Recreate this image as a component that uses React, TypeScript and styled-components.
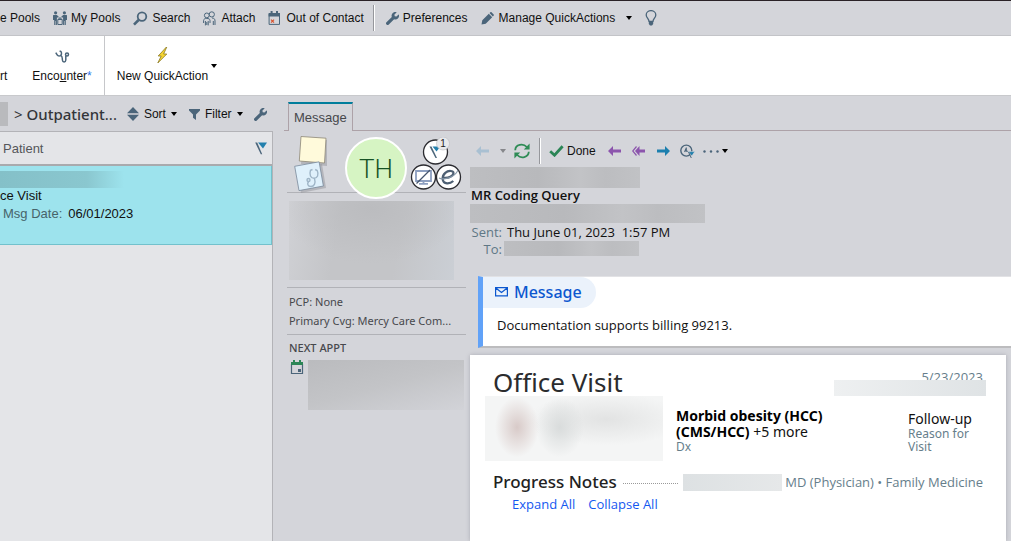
import React from "react";
import styled, { createGlobalStyle } from "styled-components";

const ui = `"Liberation Sans", Arial, sans-serif`;
const human = `"Noto Sans", "Open Sans", sans-serif`;
const reading = `"Open Sans", "Noto Sans", sans-serif`;
const slate = "#4b657a";

const GlobalStyle = createGlobalStyle`
  * { box-sizing: border-box; }
  body { margin: 0; background: #d4d5da; color: #111; font: 12px/16px ${ui}; overflow: hidden; }
  button { font: inherit; color: inherit; background: none; border: 0; padding: 0; cursor: pointer; }
  svg { display: block; flex: none; }
`;

const Page = styled.div`
  display: flex;
  flex-direction: column;
  height: 100vh;
  overflow: hidden;
`;

const Toolbar = styled.nav`
  display: flex;
  align-items: center;
  height: 36px;
  flex: none;
  border-top: 1px solid #2a2226;
  border-bottom: 1px solid #c3c4c8;
  white-space: nowrap;
`;

const ToolButton = styled.button<{ $gap?: number; $space?: number }>`
  display: flex;
  align-items: center;
  gap: ${(p) => p.$gap ?? 5}px;
  margin-right: ${(p) => p.$space ?? 13}px;
`;

const Divider = styled.span<{ $space?: number }>`
  width: 2px;
  height: 26px;
  margin-right: ${(p) => p.$space ?? 8}px;
  border-left: 1px solid #96979c;
  background: #fff;
  flex: none;
`;

const Caret = styled.span<{ $color?: string }>`
  border: 3px solid transparent;
  border-top: 4px solid ${(p) => p.$color ?? "#000"};
  border-bottom: 0;
  flex: none;
`;

const ActionBar = styled.div`
  display: flex;
  height: 60px;
  flex: none;
  background: #fff;
  border-bottom: 1px solid #c8c9cc;
`;

const ActionGroup = styled.div`
  display: flex;
  padding-right: 12px;
  border-right: 1px solid #c6c7ca;
`;

const ActionButton = styled.button<{ $left?: number }>`
  display: flex;
  flex-direction: column;
  align-items: center;
  justify-content: flex-end;
  gap: 4px;
  height: 100%;
  margin-left: ${(p) => p.$left ?? 0}px;
  padding-bottom: 11px;
  white-space: nowrap;
`;

const Star = styled.span`
  color: #2f78e8;
`;

const QuickWrap = styled.div`
  display: flex;
  align-items: center;
  gap: 3px;
`;

const Body = styled.div`
  display: flex;
  flex: 1;
  min-height: 0;
`;

const ListPane = styled.section`
  display: flex;
  flex-direction: column;
  width: 27%;
`;

const ListHead = styled.header`
  display: flex;
  align-items: center;
  height: 35px;
  flex: none;
  padding-top: 1px;
  white-space: nowrap;
`;

const Redacted = styled.div<{ $w: string; $h: number; $bg?: string }>`
  width: ${(p) => p.$w};
  height: ${(p) => p.$h}px;
  flex: none;
  background: ${(p) => p.$bg ?? "linear-gradient(90deg, #bdbec1, #b8b9bc 40%, #c2c3c6 65%, #bcbdc0 80%, #c1c2c5)"};
`;

const Crumb = styled.h1`
  margin: 0 10px 0 6px;
  font: 400 15px/20px ${human};
  color: #333539;
`;

const CrumbName = styled.span`
  font-weight: 500;
  color: #333539;
`;

const List = styled.div`
  flex: 1;
  background: #e4e5e8;
  border-top: 1px solid #b3b3b7;
  border-right: 1px solid #b3b3b7;
`;

const ListColumns = styled.div`
  display: flex;
  align-items: center;
  justify-content: space-between;
  height: 34px;
  padding: 1px 5px 0 3px;
  border-bottom: 2px solid #a9aaad;
  font-size: 13px;
  color: #55565a;
`;

const Row = styled.article`
  height: 79px;
  padding-top: 5px;
  background: #9de3ed;
  border: solid #72c1cc;
  border-width: 0 1px 1px 0;
  font-size: 13px;
  line-height: 18px;
`;

const RowLines = styled.div`
  margin-top: -1px;
`;

const RowLine = styled.div`
  display: flex;
  gap: 6px;
`;

const RowLabel = styled.span`
  padding-left: 3px;
  color: #47636a;
`;

const Detail = styled.section`
  display: flex;
  flex-direction: column;
  flex: 1;
  min-width: 0;
  padding-left: 11px;
`;

const Tabs = styled.div`
  display: flex;
  align-items: flex-end;
  height: 35px;
  flex: none;
  padding-left: 4px;
  border-bottom: 1px solid #ada2a8;
`;

const Tab = styled.button`
  height: 29px;
  margin-bottom: -1px;
  padding: 1px 5px 0;
  background: #d4d5da;
  border: 1px solid #ada2a8;
  border-top: 2px solid #007e9c;
  border-bottom: 0;
  font-size: 13px;
  color: #47484c;
`;

const DetailBody = styled.div`
  display: flex;
  flex: 1;
  min-height: 0;
`;

const Storyboard = styled.aside`
  width: 186px;
  flex: none;
  padding: 5px 4px 0 3px;
  font: 11px/19px ${human};
  color: #47484c;
`;

const Badges = styled.div`
  display: flex;
  align-items: center;
  height: 57px;
  border-bottom: 1px solid #b1b2b7;
  padding-left: 7px;
`;

const Avatar = styled.div`
  display: grid;
  place-items: center;
  width: 62px;
  height: 62px;
  margin: 7px 3px 0 18px;
  padding-top: 3px;
  flex: none;
  border: 2px solid #fff;
  border-radius: 50%;
  background: #d6f4c3;
  color: #175225;
  font: 300 26px/28px Roboto, ${ui};
`;

const Rule = styled.div`
  padding: 4px 0 4px 2px;
  border-top: 1px solid #b1b2b7;
  white-space: nowrap;
`;

const Photo = styled.div`
  padding: 8px 0 7px 2px;
`;

const SectionTitle = styled.h2`
  margin: 0;
  font: 500 11px/18px ${human};
`;

const Appt = styled.div`
  display: flex;
  gap: 4px;
  padding: 3px 0 0 1px;
`;

const Main = styled.main`
  display: flex;
  flex-direction: column;
  flex: 1;
  min-width: 0;
  font: 13px/18px ${reading};
`;

const MessageTools = styled.div`
  display: flex;
  align-items: center;
  height: 36px;
  padding: 4px 0 0 6px;
  flex: none;
  font: 12px/16px ${ui};
`;

const Subject = styled.h2`
  height: 16px;
  margin: 0;
  padding-left: 1px;
  font: 600 13px/14px ${reading};
`;

const Meta = styled.div`
  display: flex;
  align-items: center;
  height: 17px;
  white-space: pre;
`;

const MetaLabel = styled.span<{ $gap?: number }>`
  width: 32px;
  margin-right: ${(p) => p.$gap ?? 5}px;
  text-align: right;
  color: #5f7785;
`;

const MessageCard = styled.section`
  height: 72px;
  margin: 19px 0 7px 8px;
  flex: none;
  background: #fff;
  border: solid #bcbcbe;
  border-width: 1px 0 2px;
  border-left: 5px solid #61a2f8;
  border-top-color: #e2e2e5;
`;

const CardTitle = styled.h3`
  display: flex;
  align-items: center;
  gap: 6px;
  width: max-content;
  margin: 0;
  padding: 0 14px 1px 12px;
  border-radius: 0 16px 16px 0;
  background: #ebf2fb;
  color: #0b57cf;
  font: 500 16px/30px ${human};
`;

const CardText = styled.p`
  margin: 8px 0 0 14px;
`;

const Report = styled.article`
  flex: 1;
  margin-right: 5px;
  padding: 10px 23px 0 23px;
  background: #fff;
  box-shadow: 0 0 4px #a9aab2;
`;

const ReportHead = styled.header`
  display: flex;
  justify-content: space-between;
  height: 31px;
`;

const ReportTitle = styled.h2`
  margin: 0;
  font: 400 26px/34px ${human};
  color: #2b2c2e;
`;

const ReportDate = styled.div`
  display: flex;
  flex-direction: column;
  align-items: flex-end;
  padding-top: 4px;
  color: #667e8b;
  line-height: 16px;
`;

const DateMask = styled(Redacted)`
  margin: -5px -3px 0 0;
  position: relative;
`;

const Summary = styled.div`
  display: flex;
  align-items: flex-start;
  height: 65px;
  font: 14px/16px ${human};
`;

const Blurred = styled(Redacted)`
  margin: 0 13px 0 -8px;
`;

const Fact = styled.div<{ $w: number; $top: number }>`
  width: ${(p) => p.$w}px;
  padding-top: ${(p) => p.$top}px;
`;

const Diagnosis = styled.b`
  font-weight: 700;
  color: #000;
`;

const Hint = styled.div`
  font-size: 12px;
  line-height: 13px;
  color: #667e8b;
`;

const Spacer = styled.div`
  flex: 1;
`;

const NotesHead = styled.div`
  display: flex;
  align-items: center;
  padding-top: 8px;
  color: #667e8b;
  white-space: nowrap;
`;

const NotesTitle = styled.h3`
  margin: 0 6px 0 0;
  font: 500 17px/26px ${human};
  color: #222;
`;

const Dots = styled.span`
  flex: 1;
  margin-right: 5px;
  padding-top: 3px;
  border-bottom: 1px dotted #9a9a9a;
`;

const Links = styled.div`
  display: flex;
  gap: 13px;
  padding: 0 0 0 19px;
`;

const Link = styled.a`
  color: #1458f0;
  text-decoration: none;
`;

const Wrench = ({ size = 13 }: { size?: number }) => (
  <svg width={size} height={size} viewBox="0 0 512 512" fill={slate}>
    <path d="M507 109c-2-10-14-12-21-5l-75 75-68-11-11-68 75-75c7-7 4-19-5-21a144 144 0 0 0-173 189L19 402a65 65 0 1 0 92 92l208-209a144 144 0 0 0 188-176z" />
  </svg>
);

const PeopleIcon = () => (
  <svg width="14" height="15" viewBox="0 0 14 15" fill={slate}>
    <circle cx="2.6" cy="1.8" r="1.6" /><circle cx="11.4" cy="1.8" r="1.6" />
    <path d="M.4 4h3.4l1.800 1.500v1H3.900V14H2.900v-4h-.5v4H1.200V9H0V4.600zM13.600 4h-3.400L8.400 5.500v1h1.700V14h1v-4h.5v4h1.200V9H14V4.600z" />
    <path d="M4.800 8.500h4.400v5H4.800zM6 8.300V7h2v1.300" fill="#d4d5da" stroke={slate} />
  </svg>
);

const SearchIcon = () => (
  <svg width="15" height="15" viewBox="0 0 15 15" fill="none" stroke={slate}>
    <circle cx="9" cy="5.6" r="4.3" strokeWidth="1.8" /><path d="M5.6 9 1 13.6" strokeWidth="2.6" />
  </svg>
);

const AttachIcon = () => (
  <svg width="13" height="15" viewBox="0 0 13 15" fill="none" stroke={slate}>
    <circle cx="8.8" cy="3.4" r="2.6" /><path d="M9 7c2 0 3 1 3 3v4M10.3 10v4" />
    <circle cx="3.8" cy="4.4" r="2.4" fill="#d4d5da" /><path d="M.6 12V9.5C.6 8 2 7.4 3.8 7.4S7 8 7 9.5V12M2.4 10v4.4M5.2 10v4.4M3.8 11v3" />
  </svg>
);

const CalendarX = () => (
  <svg width="13" height="15" viewBox="0 0 13 15">
    <path d="M1.1 3v10.4h10.4V3" fill="none" stroke={slate} /><path d="M.6 2h11.4v3.6H.6zM2.6 0h2v3h-2zM8 0h2v3H8z" fill={slate} />
    <path d="m3 8.6 3 3m0-3-3 3" stroke="#d9532f" strokeWidth="1.2" />
  </svg>
);

const PencilIcon = () => (
  <svg width="13" height="13" viewBox="0 0 13 13" fill={slate}>
    <path d="m1.3 8.3 6.5-6.5 3.4 3.4-6.5 6.5L.5 12.5zM8.5 1.1 9.2.4c.5-.5 1-.5 1.5 0l1.8 1.8c.5.5.5 1 0 1.5l-.7.8z" />
  </svg>
);

const BulbIcon = () => (
  <svg width="12" height="16" viewBox="0 0 12 16">
    <path d="M4 11.4C4 9 1.2 7.8 1.2 4.9a4.8 4.3 0 0 1 9.6 0C10.8 7.8 8 9 8 11.4z" fill="none" stroke={slate} strokeWidth="1.3" />
    <path d="M3.8 12h4.4v2L7 15.4H5L3.8 14z" fill={slate} />
  </svg>
);

const StethIcon = () => (
  <svg width="15" height="15" viewBox="0 0 15 15" fill="none" stroke={slate} strokeWidth="1.5">
    <path d="M4.600 1.800 6 2.600c1 1.600.4 3.400-.6 4C3.600 7.400 2 6.400 1.500 4.800L.8 3.600M5.800 6.400c1.800.8 1.400 2.600 1.600 4.600.2 2.600 3.200 2.600 3.400 0V7" />
    <circle cx="12" cy="5.600" r="1.500" />
  </svg>
);

const BoltIcon = () => (
  <svg width="11" height="17" viewBox="0 0 11 17">
    <path d="M9.400 0 1.200 9h3L.8 16 9.800 7H6.600L9.800 0z" fill="#f5d431" stroke="#8b7a24" strokeWidth=".8" />
  </svg>
);

const SortIcon = () => (
  <svg width="12" height="14" viewBox="0 0 12 14" fill={slate}><path d="M6 0l6 6.3H0zM0 7.7h12L6 14z" /></svg>
);

const FunnelIcon = () => (
  <svg width="11" height="11" viewBox="0 0 11 11" fill={slate}><path d="M0 0h11v1.4L7 5.6V11L4 8.8V5.6L0 1.4z" /></svg>
);

const FlagIcon = () => (
  <svg width="12" height="13" viewBox="0 0 12 13">
    <path d="M3 .5h9L8 6.4z" fill="#2380ad" /><path d="M.2.6h2l5 11.6H5.8z" fill={slate} />
  </svg>
);

const NotesIcon = () => (
  <svg width="33" height="60" viewBox="0 0 33 60">
    <path d="m9 5 26 1-2 26-26-2z" fill="#8d8e94" opacity=".45" />
    <path d="M7 2.500 32 4.200 30.500 29 5.300 27z" fill="#fffadb" stroke="#8d8676" strokeWidth=".8" />
    <path d="m3 34 25-4 4 24-25 5z" fill="#8d8e94" opacity=".45" />
    <path d="m.7 32.300 24.400-4.500L29.400 52 5 56.600z" fill="#dff0fb" stroke="#78899b" strokeWidth=".8" />
    <g fill="none" stroke="#9fb5c7" strokeWidth="1.400">
      <path d="m18.500 35.500-2 .8c-1.500 4.500.2 8 3.500 8s5.200-3.500 3.200-7.800l-2-1M20.500 44.500c1.500 5-.5 8-3.500 8-3.500 0-4-3-2.500-4.800" />
      <circle cx="14.500" cy="46" r="1.500" />
    </g>
  </svg>
);

const StatusIcons = () => (
  <svg width="52" height="54" viewBox="0 0 52 54">
    <g fill="#fff" stroke="#2b2b30" strokeWidth="1.3">
      <circle cx="25.500" cy="15" r="12" /><circle cx="13.500" cy="40" r="12" /><circle cx="38.500" cy="40" r="12" />
    </g>
    <path d="M22.500 9.500h8l-4 5z" fill="#2380ad" /><path d="M19.500 9.500h2l5.500 11.500h-1.500z" fill={slate} />
    <circle cx="33" cy="6.500" r="6.500" fill="#e8e9ec" stroke="#c0c1c6" strokeWidth=".7" />
    <text x="33" y="10" textAnchor="middle" fontFamily="Liberation Sans, sans-serif" fontSize="10" fill="#222">1</text>
    <path d="M6 34h15v10H6zM13.500 44v2.500M9 46.800h9" fill="none" stroke="#8d9fc0" strokeWidth="1.800" />
    <path d="m6.500 46.500 13.500-13.500" stroke="#45556e" strokeWidth="1.300" />
    <path d="M34 40.800c4.500.4 9.200-1.600 9.500-4.600.2-2.600-5-3.200-8.200-.4-3.800 3.400-3.800 10 1.700 10.500 2.600.2 4.600-.8 6.300-2.300" fill="none" stroke="#4d5f73" strokeWidth="2.200" />
    <path d="M29 41c3 1.600 9.500.5 13-1.600 3.300-2 5.300-4 5.800-6.400" fill="none" stroke="#8798a9" strokeWidth="1.200" />
  </svg>
);

const CalendarIcon = () => (
  <svg width="14" height="15" viewBox="0 0 14 15">
    <path d="M1.500 4v9.500h11V4" fill="none" stroke={slate} strokeWidth="1.200" />
    <path d="M1 2h12v3H1zM3 0h2v3H3zM9 0h2v3H9z" fill="#2b8556" /><path d="M8 9h3v3H8z" fill={slate} />
  </svg>
);

const ArrowIcon = ({ color, flip }: { color: string; flip?: boolean }) => (
  <svg width="13" height="10" viewBox="0 0 13 10" fill={color}>
    <path d={flip ? "M13 5 8 0v3.500H0v3h8V10z" : "M0 5l5-5v3.500h8v3H5V10z"} />
  </svg>
);

const ReplyAllIcon = () => (
  <svg width="13" height="10" viewBox="0 0 13 10" fill="#8c55ad">
    <path d="M3 5l4.500-5v3.500H13v3H7.500V10z" /><path d="M4.500.500.700 5l3.800 4.500" fill="none" stroke="#8c55ad" strokeWidth="1.200" />
  </svg>
);

const RefreshIcon = () => (
  <svg width="16" height="16" viewBox="0 0 16 16" fill="none" stroke="#2f8c56" strokeWidth="1.800">
    <path d="M1.200 7.200C1.500 1.500 9 0 12.800 4M14.800 8.800C14.500 14.500 7 16 3.200 12" />
    <path d="M15.600 .6v5.800H9.800zM.4 15.400V9.600h5.800z" fill="#2f8c56" stroke="none" />
  </svg>
);

const CheckIcon = () => (
  <svg width="15" height="12" viewBox="0 0 15 12"><path d="m1.200 6.300 4.300 3.900L13.600 1.200" fill="none" stroke="#2b8556" strokeWidth="2.800" /></svg>
);

const ClockFlagIcon = () => (
  <svg width="15" height="15" viewBox="0 0 15 15" fill="none" stroke={slate}>
    <circle cx="6.300" cy="6.600" r="5.500" strokeWidth="1.400" />
    <path d="M6.300 3.500v3.700h1.800M6 4.500 4.600 8" strokeWidth="1.100" />
    <path d="M8.200 7.600h6.600l-3 4.400z" fill="#2380ad" stroke="#d4d5da" strokeWidth=".6" /><path d="m8.500 8 2.800 6" />
  </svg>
);

const DotsIcon = () => (
  <svg width="16" height="3" viewBox="0 0 16 3" fill={slate}>
    <circle cx="1.500" cy="1.500" r="1.200" /><circle cx="8" cy="1.500" r="1.200" /><circle cx="14.500" cy="1.500" r="1.200" />
  </svg>
);

const MailIcon = () => (
  <svg width="13" height="10" viewBox="0 0 13 10" fill="none" stroke="#0b57cf" strokeWidth="1.200">
    <path d="M.6.6h11.800v8.300H.6zM.8 1l5.700 4.500L12.200 1" />
  </svg>
);

export default function App() {
  return (
    <Page>
      <GlobalStyle />
      <Toolbar>
        <ToolButton>e Pools</ToolButton>
        <ToolButton $gap={4}><PeopleIcon />My Pools</ToolButton>
        <ToolButton $gap={4}><SearchIcon />Search</ToolButton>
        <ToolButton><AttachIcon />Attach</ToolButton>
        <ToolButton $space={9}><CalendarX />Out of Contact</ToolButton>
        <Divider $space={11} />
        <ToolButton $gap={4}><Wrench />Preferences</ToolButton>
        <ToolButton $space={11}><PencilIcon />Manage QuickActions</ToolButton>
        <ToolButton aria-label="More QuickActions"><Caret /></ToolButton>
        <ToolButton aria-label="Tips"><BulbIcon /></ToolButton>
      </Toolbar>
      <ActionBar>
        <ActionGroup>
          <ActionButton>rt</ActionButton>
          <ActionButton $left={25}>
            <StethIcon />
            <span>Enco<u>u</u>nter<Star>*</Star></span>
          </ActionButton>
        </ActionGroup>
        <QuickWrap>
          <ActionButton $left={12}><BoltIcon />New QuickAction</ActionButton>
          <ToolButton aria-label="QuickAction options"><Caret /></ToolButton>
        </QuickWrap>
      </ActionBar>
      <Body>
        <ListPane>
          <ListHead>
            <Redacted $w="8px" $h={24} $bg="#b9babd" />
            <Crumb>&gt; <CrumbName>Outpatient</CrumbName>...</Crumb>
            <ToolButton $space={12}><SortIcon />Sort<Caret /></ToolButton>
            <ToolButton $space={11}><FunnelIcon />Filter<Caret /></ToolButton>
            <ToolButton $space={0} aria-label="List settings"><Wrench /></ToolButton>
          </ListHead>
          <List>
            <ListColumns>Patient<FlagIcon /></ListColumns>
            <Row>
              <Redacted $w="124px" $h={17} $bg="linear-gradient(90deg, #84c0c8, #8ac7cf 70%, #9de3ed)" />
              <RowLines>
                <RowLine>ce Visit</RowLine>
                <RowLine><RowLabel>Msg Date:</RowLabel>06/01/2023</RowLine>
              </RowLines>
            </Row>
          </List>
        </ListPane>
        <Detail>
          <Tabs><Tab>Message</Tab></Tabs>
          <DetailBody>
            <Storyboard>
              <Badges>
                <NotesIcon />
                <Avatar>TH</Avatar>
                <StatusIcons />
              </Badges>
              <Photo>
                <Redacted $w="165px" $h={79} $bg="radial-gradient(90px 55px at 50% 10%, #bbbcbf, transparent), linear-gradient(100deg, #d0d1d5, #c4c5c8 30%, #c4c5c8 65%, #cbcfd5)" />
              </Photo>
              <Rule>
                <div>PCP: None</div>
                <div>Primary Cvg: Mercy Care Com...</div>
              </Rule>
              <Rule>
                <SectionTitle>NEXT APPT</SectionTitle>
                <Appt>
                  <CalendarIcon />
                  <Redacted $w="156px" $h={50} $bg="linear-gradient(165deg, #babbbe, #c3c4c7 50%, #d2d3d8)" />
                </Appt>
              </Rule>
            </Storyboard>
            <Main>
              <MessageTools>
                <ToolButton $gap={11} $space={8} aria-label="Back"><ArrowIcon color="#a9c0d2" /><Caret $color="#86878b" /></ToolButton>
                <ToolButton $space={9} aria-label="Refresh"><RefreshIcon /></ToolButton>
                <Divider />
                <ToolButton $gap={3} $space={12}><CheckIcon />Done</ToolButton>
                <ToolButton $space={11} aria-label="Reply"><ArrowIcon color="#8c55ad" /></ToolButton>
                <ToolButton $space={12} aria-label="Reply all"><ReplyAllIcon /></ToolButton>
                <ToolButton $space={10} aria-label="Forward"><ArrowIcon color="#1c7fae" flip /></ToolButton>
                <ToolButton $space={8} aria-label="Postpone"><ClockFlagIcon /></ToolButton>
                <ToolButton $gap={3} aria-label="More"><DotsIcon /><Caret /></ToolButton>
              </MessageTools>
              <Redacted $w="170px" $h={21} />
              <Subject>MR Coding Query</Subject>
              <Redacted $w="235px" $h={19} />
              <Meta><MetaLabel>Sent:</MetaLabel>Thu June 01, 2023  1:57 PM</Meta>
              <Meta><MetaLabel $gap={2}>To:</MetaLabel><Redacted $w="135px" $h={15} /></Meta>
              <MessageCard>
                <CardTitle><MailIcon />Message</CardTitle>
                <CardText>Documentation supports billing 99213.</CardText>
              </MessageCard>
              <Report>
                <ReportHead>
                  <ReportTitle>Office Visit</ReportTitle>
                  <ReportDate>
                    5/23/2023
                    <DateMask $w="152px" $h={16} $bg="linear-gradient(90deg, #eef0f1, #dfe3e5)" />
                  </ReportDate>
                </ReportHead>
                <Summary>
                  <Blurred $w="178px" $h={65} $bg="radial-gradient(22px 30px at 18% 48%, #d8cac8, transparent), radial-gradient(24px 30px at 42% 48%, #d9dcdc, transparent), radial-gradient(80px 26px at 68% 36%, #e2e3e3, transparent), #f4f5f5" />
                  <Fact $w={175} $top={12}>
                    <Diagnosis>Morbid obesity (HCC)<br />(CMS/HCC)</Diagnosis> +5 more
                    <Hint>Dx</Hint>
                  </Fact>
                  <Spacer />
                  <Fact $w={75} $top={15}>
                    Follow-up
                    <Hint>Reason for Visit</Hint>
                  </Fact>
                </Summary>
                <NotesHead>
                  <NotesTitle>Progress Notes</NotesTitle>
                  <Dots />
                  <Redacted $w="99px" $h={17} $bg="linear-gradient(90deg, #dde1e3, #e6e8e9)" />
                  <span>&nbsp;MD (Physician) • Family Medicine</span>
                </NotesHead>
                <Links>
                  <Link href="#expand">Expand All</Link>
                  <Link href="#collapse">Collapse All</Link>
                </Links>
              </Report>
            </Main>
          </DetailBody>
        </Detail>
      </Body>
    </Page>
  );
}
